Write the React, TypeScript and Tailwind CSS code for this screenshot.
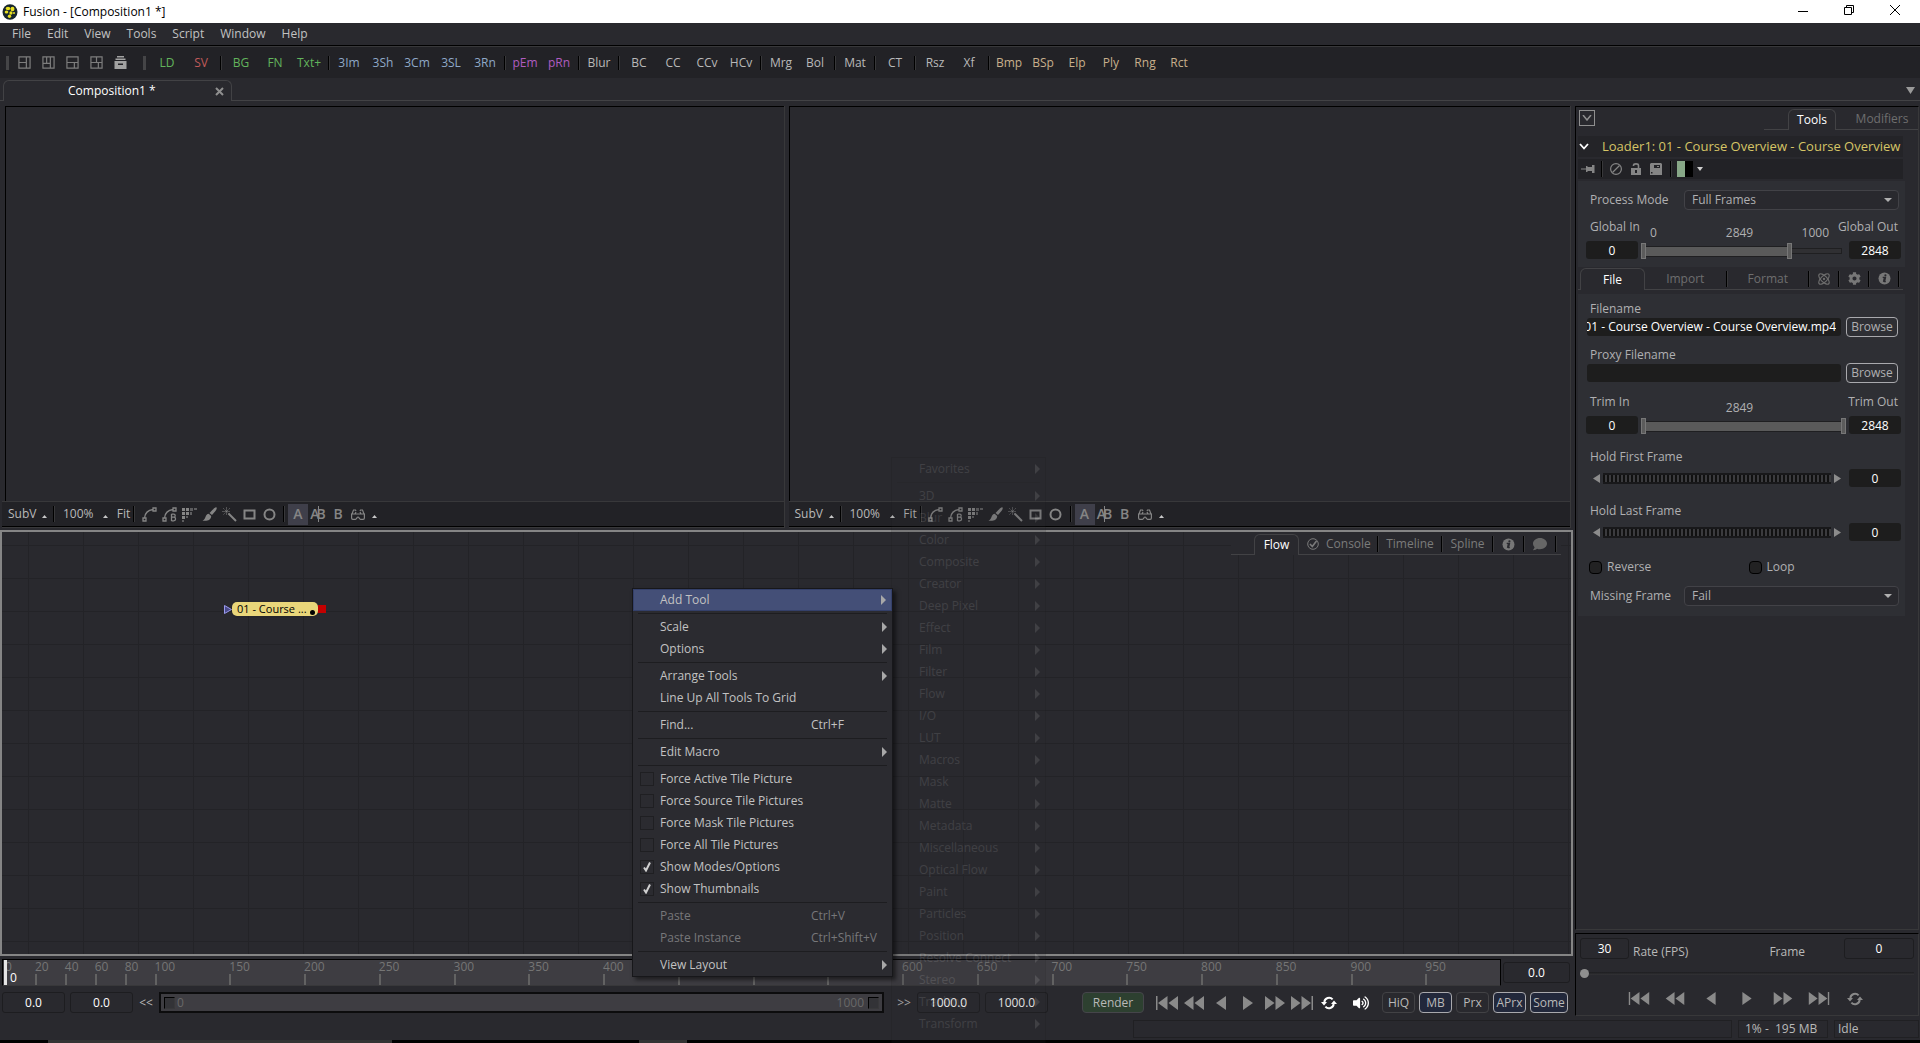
import { Fragment, useState } from 'react';
import type { ReactNode } from 'react';
import { FaCog, FaComment, FaVolumeUp } from 'react-icons/fa';
import { Atom } from 'lucide-react';
import clsx from 'clsx';

const menus = ['File', 'Edit', 'View', 'Tools', 'Script', 'Window', 'Help'];

const toolGroups = [
    { color: 'text-[#62b45c]', tools: ['LD'] },
    { color: 'text-[#c05a5a]', tools: ['SV'], sep: true },
    { color: 'text-[#62b45c]', tools: ['BG', 'FN', 'Txt+'], sep: true },
    { color: 'text-[#8fa9c8]', tools: ['3Im', '3Sh', '3Cm', '3SL', '3Rn'], sep: true },
    { color: 'text-[#b05cc0]', tools: ['pEm', 'pRn'], sep: true },
    { color: 'text-[#b9b9b9]', tools: ['Blur'], sep: true },
    { color: 'text-[#b9b9b9]', tools: ['BC', 'CC', 'CCv', 'HCv'], sep: true },
    { color: 'text-[#b9b9b9]', tools: ['Mrg', 'Bol'], sep: true },
    { color: 'text-[#b9b9b9]', tools: ['Mat'], sep: true },
    { color: 'text-[#b9b9b9]', tools: ['CT'], sep: true },
    { color: 'text-[#b9b9b9]', tools: ['Rsz', 'Xf'], sep: true },
    { color: 'text-[#c8b08c]', tools: ['Bmp', 'BSp', 'Elp', 'Ply', 'Rng', 'Rct'] },
];

const layoutIcons = [
    'M1 1h12v12H1zM9 1v12M9 7H1',
    'M1 1h12v12H1zM5 1v7M9 1v12M1 8h8',
    'M1 1h12v12H1zM1 7h12M9 7v6',
    'M1 1h12v12H1zM1 7h12M7 1v6M9 7v6',
];

type MenuEntry = {
    label: string;
    shortcut?: string;
    arrow?: boolean;
    check?: boolean;
    disabled?: boolean;
    active?: boolean;
};

const contextMenu: MenuEntry[][] = [
    [{ label: 'Add Tool', arrow: true, active: true }],
    [{ label: 'Scale', arrow: true }, { label: 'Options', arrow: true }],
    [{ label: 'Arrange Tools', arrow: true }, { label: 'Line Up All Tools To Grid' }],
    [{ label: 'Find...', shortcut: 'Ctrl+F' }],
    [{ label: 'Edit Macro', arrow: true }],
    [
        { label: 'Force Active Tile Picture', check: false },
        { label: 'Force Source Tile Pictures', check: false },
        { label: 'Force Mask Tile Pictures', check: false },
        { label: 'Force All Tile Pictures', check: false },
        { label: 'Show Modes/Options', check: true },
        { label: 'Show Thumbnails', check: true },
    ],
    [
        { label: 'Paste', shortcut: 'Ctrl+V', disabled: true },
        { label: 'Paste Instance', shortcut: 'Ctrl+Shift+V', disabled: true },
    ],
    [{ label: 'View Layout', arrow: true }],
];

const toolCategories = [
    '3D', 'Blur', 'Color', 'Composite', 'Creator', 'Deep Pixel', 'Effect', 'Film', 'Filter', 'Flow', 'I/O', 'LUT',
    'Macros', 'Mask', 'Matte', 'Metadata', 'Miscellaneous', 'Optical Flow', 'Paint', 'Particles', 'Position',
    'Resolve Connect', 'Stereo', 'Tracking', 'Transform',
];

const rulerMarks = [0, 20, 40, 60, 80, 100, 150, 200, 250, 300, 350, 400, 450, 500, 550, 600, 650, 700, 750, 800, 850, 900, 950, 1000];

const thumb =
    '[&::-webkit-slider-thumb]:pointer-events-auto [&::-webkit-slider-thumb]:appearance-none [&::-webkit-slider-thumb]:h-4 [&::-webkit-slider-thumb]:w-[5px] [&::-webkit-slider-thumb]:border [&::-webkit-slider-thumb]:border-[#777] [&::-webkit-slider-thumb]:bg-[#5c5c5c]';

const bracketThumb =
    '[&::-webkit-slider-thumb]:pointer-events-auto [&::-webkit-slider-thumb]:appearance-none [&::-webkit-slider-thumb]:h-3 [&::-webkit-slider-thumb]:w-[11px] [&::-webkit-slider-thumb]:border [&::-webkit-slider-thumb]:border-[#38383a] [&::-webkit-slider-thumb]:border-l-black [&::-webkit-slider-thumb]:border-t-black [&::-webkit-slider-thumb]:bg-[#333337]';

/* ---------- small pieces ---------- */

const Sep = ({ className }: { className?: string }) => (
    <span className={clsx('w-0.5 shrink-0 border-l border-black bg-[#38383a]', className)} />
);

const ArrowUp = () => (
    <svg width="5" height="3" viewBox="0 0 5 3" className="mt-1 shrink-0">
        <path d="M0 3 2.5 0 5 3z" fill="#c8c8c8" />
    </svg>
);

const ArrowRight = ({ className }: { className?: string }) => (
    <svg width="5" height="10" viewBox="0 0 5 10" className={clsx('shrink-0', className)}>
        <path d="M0 0 5 5 0 10z" fill="currentColor" />
    </svg>
);

const InfoIcon = () => (
    <svg width="13" height="13" viewBox="0 0 13 13">
        <circle cx="6.5" cy="6.5" r="6" fill="#777" />
        <circle cx="7.4" cy="3.3" r="1.1" fill="#29292e" />
        <path d="M4.7 5.4h2.8L6.6 9.6h1.2M5.5 9.8 6.3 6" stroke="#29292e" strokeWidth="1.3" fill="none" />
    </svg>
);

const LoopIcon = () => (
    <svg width="16" height="14" viewBox="0 0 16 14">
        <path d="M3.3 6A4.8 4.8 0 0 1 11.6 3.4M12.7 8A4.8 4.8 0 0 1 4.4 10.6" stroke="currentColor" strokeWidth="2" fill="none" />
        <path d="M0 6h6L3 9.6zM16 8h-6l3-3.6z" fill="currentColor" />
    </svg>
);

const transportShapes = [
    { name: 'Go to start', w: 22, d: 'M0 0h1.5v14H0zM11.5 0v14L2 7zM22 0v14L12.5 7z' },
    { name: 'Fast reverse', w: 20, d: 'M9.5 0v14L0 7zM20 0v14L10.5 7z' },
    { name: 'Play reverse', w: 10, d: 'M10 0v14L0 7z' },
    { name: 'Play forward', w: 10, d: 'M0 0v14l10-7z' },
    { name: 'Fast forward', w: 20, d: 'M0 0v14l9.5-7zM10.5 0v14L20 7z' },
    { name: 'Go to end', w: 22, d: 'M0 0v14l9.5-7zM10.5 0v14L20 7zM20.5 0H22v14h-1.5z' },
];

const Transport = ({ cell, small }: { cell: string; small?: boolean }) => (
    <>
        {transportShapes.map((s) => (
            <button key={s.name} aria-label={s.name} className={clsx('flex shrink-0 items-center justify-center text-[#8a8a8a]', cell)}>
                <svg width={s.w} height={small ? 13 : 14} viewBox={`0 0 ${s.w} 14`}>
                    <path d={s.d} fill="currentColor" />
                </svg>
            </button>
        ))}
    </>
);

const Field = ({ label, value, className }: { label: string; value: string; className: string }) => (
    <input
        aria-label={label}
        defaultValue={value}
        className={clsx('shrink-0 rounded-[3px] text-center text-white outline-none', className)}
    />
);

const darkField = 'h-[18px] w-[52px] bg-[#1d1d1d]';
const flatField = 'h-[21px] border border-[#1d1d20] bg-[#29292e]';

/* ---------- window chrome ---------- */

const TitleBar = () => (
    <header className="flex h-[23px] shrink-0 items-center bg-white pr-[2px] text-black">
        <svg width="16" height="16" viewBox="0 0 16 16" className="ml-[2px]">
            <ellipse cx="8" cy="8" rx="7.5" ry="7.8" fill="#17262e" />
            <g fill="#e8e020">
                <ellipse cx="6" cy="4.5" rx="2.3" ry="1.8" />
                <ellipse cx="10.5" cy="5" rx="2" ry="2.2" />
                <ellipse cx="4.5" cy="8" rx="1.8" ry="1.6" />
                <ellipse cx="9" cy="9" rx="1.6" ry="1.8" />
                <ellipse cx="7.5" cy="12.2" rx="1.7" ry="1.7" />
                <circle cx="12" cy="9" r="1" />
            </g>
        </svg>
        <h1 className="ml-[5px] flex-1">Fusion - [Composition1 *]</h1>
        <button aria-label="Minimize" className="flex h-full w-[46px] items-center justify-center">
            <svg width="10" height="10"><path d="M0 4.5h10" stroke="#000" /></svg>
        </button>
        <button aria-label="Restore" className="flex h-full w-[46px] items-center justify-center pb-1">
            <svg width="10" height="10"><path d="M.5 2.5h7v7h-7zM2.500 2.5v-2h7v7h-2" stroke="#000" fill="none" /></svg>
        </button>
        <button aria-label="Close" className="flex h-full w-[46px] items-center justify-center pb-1">
            <svg width="10" height="10"><path d="m0 0 10 10M10 0 0 10" stroke="#000" /></svg>
        </button>
    </header>
);

const Toolbar = () => (
    <div className="flex h-[31px] shrink-0 items-center bg-[#222226]">
        <span className="ml-[6px] mr-[3px] h-3.5 w-[3px] bg-[#454547]" />
        {layoutIcons.map((d) => (
            <button key={d} aria-label="Layout preset" className="flex w-6 justify-center">
                <svg width="13" height="13" viewBox="0 0 14 14"><path d={d} stroke="#7d7d7d" strokeWidth="1.3" fill="none" /></svg>
            </button>
        ))}
        <button aria-label="Bins" className="flex w-6 justify-center">
            <svg width="13" height="13" viewBox="0 0 13 13" fill="#a2a2a2">
                <path d="M3 0h7v1.5H3zM1.5 2.5h10V4h-10zM.5 5h12v8H.5zM4 7.5V9h5V7.5z" fillRule="evenodd" />
            </svg>
        </button>
        <span className="ml-[11px] mr-1 h-3.5 w-[3px] bg-[#454547]" />
        {toolGroups.map((group, i) => (
            <Fragment key={i}>
                {group.tools.map((tool) => (
                    <button key={tool} className={clsx('w-[34px] text-center', group.color)}>{tool}</button>
                ))}
                {group.sep && <Sep className="mx-0.5 h-3.5" />}
            </Fragment>
        ))}
    </div>
);

const CompositionTabs = () => (
    <div className="flex h-[23px] shrink-0 items-stretch pt-[2px]">
        <span className="w-[3px] border-b border-[#424245]" />
        <div className="flex w-[229px] items-center rounded-t-md border border-b-0 border-[#424245] text-white">
            <button className="flex-1 pl-[64px] text-left">Composition1 *</button>
            <button aria-label="Close tab" className="mr-[7px]">
                <svg width="9" height="9"><path d="m1 1 7 7M8 1 1 8" stroke="#8f8f8f" strokeWidth="2" /></svg>
            </button>
        </div>
        <div className="flex flex-1 items-center justify-end border-b border-[#424245] pr-[5px]">
            <button aria-label="Tab list">
                <svg width="9" height="7"><path d="M0 0h9L4.5 7z" fill="#9a9a9a" /></svg>
            </button>
        </div>
    </div>
);

/* ---------- viewers ---------- */

const viewIcons: { name: string; icon: ReactNode }[] = [
    {
        name: 'Polyline',
        icon: <path d="M2.5 11C3 6 6.5 3 11 2.5M1 11h3v3H1zM11 1h3v3h-3z" stroke="currentColor" strokeWidth="1.3" fill="none" />,
    },
    {
        name: 'B-Spline',
        icon: (
            <path
                d="M2.5 11C3 6 6.5 3 11 2.5M1 11h3v3H1zM11 1h3v3h-3zM9.5 7v7M9.5 7.2h2.2c2 0 2 3 0 3H9.500M11.7 10.2c2.5 0 2.5 3.6 0 3.6H9.5"
                stroke="currentColor"
                strokeWidth="1.3"
                fill="none"
            />
        ),
    },
    {
        name: 'Bitmap',
        icon: (
            <g fill="currentColor">
                <path d="M0 1h3v3H0zM4 1h3v3H4zM0 5h3v3H0zM4 5h3v3H4zM0 9h3v3H0z" />
                <path opacity=".6" d="M8 1h3v3H8zM12 1h3v2h-3zM8 5h2v3H8zM4 9h2v2H4zM0 13h2v2H0z" />
            </g>
        ),
    },
    {
        name: 'Paint',
        icon: <path d="M14.5.5c1 1-1 3.5-4.5 7.5L7.5 6C11 2.5 13.5-.5 14.5.5zM6.7 6.8l2.5 2.1C9 13 5 14.5.5 13.5c2.5-.7 2.5-3 3.5-4.8.7-1.1 1.6-1.700 2.700-1.900z" fill="currentColor" />,
    },
    {
        name: 'Wand',
        icon: (
            <>
                <path d="m6.5 6.5 7.5 7.5" stroke="currentColor" strokeWidth="2" />
                <path d="M4.5.5v8M.5 4.5h8M1.5 1.5l6 6M7.5 1.5l-6 6" stroke="currentColor" strokeDasharray="1 1" />
            </>
        ),
    },
    { name: 'Rectangle', icon: <path d="M2.5 3.5h10v8h-10z" stroke="currentColor" strokeWidth="2" fill="none" /> },
    { name: 'Ellipse', icon: <circle cx="7.5" cy="7.5" r="5" stroke="currentColor" strokeWidth="2" fill="none" /> },
];

const Viewer = ({ indent }: { indent?: boolean }) => (
    <section className="flex min-w-0 flex-1 flex-col border-b border-r border-[#38383a]">
        <div className={clsx('flex-1 border-l border-t border-black', indent && 'ml-[3px]')} />
        <div className="flex h-[26px] shrink-0 items-center border-y border-b-black border-t-[#38383a] bg-[#222226] pl-[6px] text-[#b9b9b9]">
            <button className="flex w-[45px] items-center gap-1.5">SubV <ArrowUp /></button>
            <Sep className="h-4" />
            <button className="ml-2 flex w-[45px] items-center justify-between"><span>100%</span><ArrowUp /></button>
            <button className="ml-[6px] w-[19px]">Fit</button>
            <Sep className="mr-1 h-4" />
            {viewIcons.map((v) => (
                <button key={v.name} aria-label={v.name} className="flex w-5 justify-center text-[#858585]">
                    <svg width="15" height="15" viewBox="0 0 15 15">{v.icon}</svg>
                </button>
            ))}
            <Sep className="ml-1 mr-[3px] h-4" />
            <button className="h-[21px] w-5 bg-[#3f3f4a] text-sm font-semibold text-[#858585]">A</button>
            <button aria-label="A and B" className="flex w-5 items-center justify-center text-sm font-semibold text-[#858585]">
                <span>A</span>
                <span className="-mx-0.5 h-4 w-px bg-[#858585]" />
                <span>B</span>
            </button>
            <button className="w-5 text-sm font-semibold text-[#858585]">B</button>
            <button aria-label="Stereo" className="mr-1 flex w-5 justify-center">
                <svg width="14" height="12" viewBox="0 0 14 12" stroke="#858585" fill="none" strokeWidth="1.2">
                    <path d="M.6 6h12.8v4c0 .7-.6 1.3-1.3 1.3H9.5C8.5 11.3 8 9 7 9s-1.5 2.3-2.5 2.3H1.9C1.2 11.3.6 10.7.6 10zM1 6l1.500-4h2l.5 1M13 6l-1.5-4h-2L9 3M4 6l1-2M10 6 9 4" />
                </svg>
            </button>
            <ArrowUp />
        </div>
    </section>
);

/* ---------- flow ---------- */

const FlowTabs = () => (
    <div className="flex h-[23px] items-stretch self-end bg-[#29292e] pt-0.5 text-[#7b7b7b]">
        <span className="w-[23px] border-b border-[#424245]" />
        <button className="w-[45px] rounded-t-md border border-b-0 border-[#424245] text-white">Flow</button>
        <div className="flex items-center border-b border-[#424245]">
            <button className="flex w-[78px] items-center gap-[7px] pl-2">
                <svg width="12" height="12" viewBox="0 0 12 12" stroke="#7b7b7b" fill="none">
                    <circle cx="6" cy="6" r="5.3" />
                    <path d="m3 6 2.3 2.5L9.5 3" strokeWidth="1.6" />
                </svg>
                Console
            </button>
            <Sep className="h-4" />
            <button className="w-[62px]">Timeline</button>
            <Sep className="h-4" />
            <button className="w-[49px]">Spline</button>
            <Sep className="h-4" />
            <button aria-label="Info" className="flex w-[29px] justify-center"><InfoIcon /></button>
            <Sep className="h-4" />
            <button aria-label="Comments" className="flex w-[30px] justify-center"><FaComment size={14} color="#666" /></button>
            <Sep className="mr-1 h-4" />
        </div>
    </div>
);

const Flow = () => (
    <section className="relative flex min-h-0 flex-1 flex-col border-2 border-[#858585] bg-[linear-gradient(#232327_1px,transparent_1px),linear-gradient(90deg,#232327_1px,transparent_1px)] bg-[size:55px_33px] bg-[position:26px_13px] pr-[10px]">
        <FlowTabs />
        {/* loader tile, placed on the free canvas */}
        <div className="absolute left-[222px] top-[70px] flex items-center">
            <svg width="8" height="9" viewBox="0 0 8 9"><path d="M.5.5v8l7-4z" fill="#4a4a8a" stroke="#9a9aee" /></svg>
            <div className="flex h-3.5 w-[86px] items-center justify-between rounded-[5px] bg-[#e9d67a] pl-[5px] pr-[3px] text-[11px] leading-[14px] text-black shadow">
                <span>01 - Course ...</span>
                <span className="mt-1.5 size-[5px] rounded-full bg-black" />
            </div>
            <span className="size-2 bg-[#c40000]" />
        </div>
    </section>
);

/* ---------- timeline ---------- */

const TimeRuler = () => (
    <div className="mt-[3px] flex h-[27px] shrink-0 items-stretch pl-[2px] pr-[3px]">
        <div className="relative flex flex-1 overflow-hidden border border-b-[#38383a] border-l-black border-r-black border-t-black bg-[#3e3d42] pl-[2px]">
            {rulerMarks.map((mark, i) => (
                <div
                    key={mark}
                    className={clsx('flex min-w-0 basis-0 flex-col', i === rulerMarks.length - 1 && 'w-1 flex-none')}
                    style={{ flexGrow: i < rulerMarks.length - 1 ? rulerMarks[i + 1] - mark : 0 }}
                >
                    <span className="h-3.5 leading-[13px] text-[#757575]">{mark}</span>
                    <span className="h-[11px] w-0.5 bg-[#626262]" />
                </div>
            ))}
            <div className="absolute bottom-0 left-[1px] top-0 w-[3px] bg-[#e4e4e4]" />
            <span className="absolute bottom-0 left-[7px] leading-[14px] text-white">0</span>
        </div>
        <Field label="Current time" value="0.0" className={clsx(flatField, 'ml-0.5 mt-[3px] w-[67px]')} />
    </div>
);

const RenderRange = () => (
    <div className="grid h-[21px] flex-1 items-center border-2 border-[#0c0c0d] bg-[#3e3d42] px-[3px] *:col-start-1 *:row-start-1">
        <div className="flex justify-between pl-[13px] pr-[15px] text-[#686868]">
            <span>0</span>
            <span>1000</span>
        </div>
        <input type="range" aria-label="Render start" min={0} max={1000} defaultValue={0} className={clsx('pointer-events-none h-4 w-full appearance-none bg-transparent', bracketThumb)} />
        <input type="range" aria-label="Render end" min={0} max={1000} defaultValue={1000} className={clsx('pointer-events-none h-4 w-full appearance-none bg-transparent', bracketThumb)} />
    </div>
);

const qualityButtons = [
    { label: 'HiQ', on: false },
    { label: 'MB', on: true },
    { label: 'Prx', on: false },
    { label: 'APrx', on: true },
    { label: 'Some', on: true, wide: true },
];

const TransportBar = () => {
    const [active, setActive] = useState(qualityButtons.filter((b) => b.on).map((b) => b.label));

    const toggle = (label: string) => {
        setActive(active.includes(label) ? active.filter((l) => l !== label) : [...active, label]);
    };

    return (
        <div className="mb-[3px] mt-[6px] flex h-[21px] shrink-0 items-center pl-[2px] pr-[5px] text-[#b9b9b9]">
            <Field label="Global start" value="0.0" className={clsx(flatField, 'w-[63px]')} />
            <Field label="Render start time" value="0.0" className={clsx(flatField, 'ml-[5px] w-[63px]')} />
            <button className="w-[26px]">&lt;&lt;</button>
            <RenderRange />
            <button className="ml-[7px] w-[26px]">&gt;&gt;</button>
            <Field label="Render end time" value="1000.0" className={clsx(flatField, 'w-[63px]')} />
            <Field label="Global end" value="1000.0" className={clsx(flatField, 'ml-[5px] w-[63px]')} />
            <button className="ml-[34px] mr-[9px] h-[21px] w-[62px] rounded border border-[#45454a] bg-[#2d4030]">Render</button>
            <Transport cell="w-[27px]" />
            <button aria-label="Loop" className="flex w-[27px] justify-center text-white"><LoopIcon /></button>
            <button aria-label="Audio" className="mr-0.5 flex w-[38px] justify-center text-white"><FaVolumeUp size={16} /></button>
            <div className="flex gap-[4px]">
                {qualityButtons.map((b) => (
                    <button
                        key={b.label}
                        onClick={() => toggle(b.label)}
                        className={clsx(
                            'h-[21px] rounded border',
                            b.wide ? 'w-[38px]' : 'w-[33px]',
                            active.includes(b.label) ? 'border-[#a9a9ad] bg-[#22283b]' : 'border-[#424245]',
                        )}
                    >
                        {b.label}
                    </button>
                ))}
            </div>
        </div>
    );
};

/* ---------- inspector ---------- */

const RangePair = ({ name, high, range }: { name: string; high: number; range: ReactNode }) => (
    <div className="flex flex-1 flex-col pt-[6px]">
        <div className="grid h-[18px] grid-cols-3 pl-[9px] pr-[17px]">{range}</div>
        <div className="grid h-4 items-center *:col-start-1 *:row-start-1">
            <div className="mr-1 h-1.5 border border-[#1f1f21] bg-[#303033]" />
            <div className="h-[11px] border-y border-[#1f1f21] bg-[#5a5a5a]" style={{ width: `${high}%` }} />
            <input type="range" aria-label={`${name} in`} defaultValue={0} className={clsx('pointer-events-none h-4 w-full appearance-none bg-transparent', thumb)} />
            <input type="range" aria-label={`${name} out`} defaultValue={high} className={clsx('pointer-events-none h-4 w-full appearance-none bg-transparent', thumb)} />
        </div>
    </div>
);

const InOut = ({ name, high, children }: { name: string; high: number; children: ReactNode }) => (
    <div className="flex gap-[3px] pr-1">
        <div className="flex w-[52px] flex-col gap-1">
            <span className="h-[18px] whitespace-nowrap pl-1">{name} In</span>
            <Field label={`${name} In`} value="0" className={darkField} />
        </div>
        <RangePair name={name} high={high} range={children} />
        <div className="flex w-[52px] flex-col gap-1">
            <span className="flex h-[18px] justify-end whitespace-nowrap pr-[3px]">{name} Out</span>
            <Field label={`${name} Out`} value="2848" className={darkField} />
        </div>
    </div>
);

const SelectRow = ({ id, label, value, options }: { id: string; label: string; value: string; options: string[] }) => (
    <div className="flex items-center">
        <label htmlFor={id} className="w-[98px] whitespace-nowrap pl-1">{label}</label>
        <div className="relative mr-[6px] flex-1">
            <select id={id} defaultValue={value} className="block h-5 w-full appearance-none rounded border border-[#424247] bg-[#29292e] pl-[7px] outline-none">
                {options.map((o) => <option key={o}>{o}</option>)}
            </select>
            <svg width="8" height="4" className="pointer-events-none absolute right-[7px] top-2"><path d="M0 0h8L4 4z" fill="#b0b0b0" /></svg>
        </div>
    </div>
);

const FileRow = ({ id, label, value }: { id: string; label: string; value: string }) => (
    <div>
        <label htmlFor={id} className="block h-[17px] pl-1 leading-[17px]">{label}</label>
        <div className="flex h-5 items-center justify-between pl-px pr-[7px]">
            <div className="flex h-[18px] w-[254px] justify-end overflow-hidden rounded-[3px] bg-[#1d1d1d] pr-[5px]">
                <input id={id} defaultValue={value} className="w-[272px] shrink-0 bg-transparent text-right text-white outline-none" />
            </div>
            <button className="h-5 w-[52px] rounded border border-[#a9a9ad]">Browse</button>
        </div>
    </div>
);

const JogWheel = ({ id, label }: { id: string; label: string }) => (
    <div>
        <label htmlFor={id} className="block h-[18px] pl-1">{label}</label>
        <div className="mt-0.5 flex h-[18px] items-center pr-1">
            <button aria-label="Decrease" className="ml-[7px] mr-[3px]">
                <svg width="7" height="9"><path d="M7 0v9L0 4.5z" fill="#8c8c8c" /></svg>
            </button>
            <input
                type="range"
                aria-label={`${label} wheel`}
                className="h-[11px] min-w-0 flex-1 appearance-none border-y-2 border-[#18181a] bg-[repeating-linear-gradient(90deg,#111_0_2px,#3b3b3e_2px_4px)] [&::-webkit-slider-thumb]:appearance-none"
            />
            <button aria-label="Increase" className="ml-[3px] mr-2">
                <svg width="7" height="9"><path d="M0 0v9l7-4.5z" fill="#8c8c8c" /></svg>
            </button>
            <input id={id} defaultValue="0" className={clsx(darkField, 'rounded-[3px] text-center text-white outline-none')} />
        </div>
    </div>
);

const CheckField = ({ label }: { label: string }) => (
    <label className="flex w-[163px] items-center gap-[5px] pl-[3px]">
        <input type="checkbox" className="size-[13px] appearance-none rounded-sm border border-black bg-[#222223] checked:bg-[#8c8c8c]" />
        {label}
    </label>
);

const Inspector = () => (
    <section className="flex min-h-0 flex-1 flex-col border border-b-[#38383a] border-l-black border-r-[#38383a] border-t-black pl-0.5">
        <div className="flex h-[23px] shrink-0 items-stretch pt-0.5 text-[#6e6e6e]">
            <button aria-label="Expand all" className="ml-px mt-px flex size-4 items-center justify-center border border-[#8f8f8f]">
                <svg width="10" height="6"><path d="m1 0 4 5 4-5" stroke="#8f8f8f" strokeWidth="1.5" fill="none" /></svg>
            </button>
            <span className="flex-1" />
            <span className="w-6 border-b border-[#424245]" />
            <button className="w-12 rounded-t-md border border-b-0 border-[#424245] text-white">Tools</button>
            <button className="w-[82px] border-b border-[#424245] pl-2.5">Modifiers</button>
        </div>

        <div className="mr-[15px] mt-1.5 flex h-[21px] shrink-0 items-center bg-[#242428]">
            <button aria-label="Collapse" className="ml-px">
                <svg width="10" height="7"><path d="m1 1 4 4.5L9 1" stroke="#fff" strokeWidth="1.8" fill="none" /></svg>
            </button>
            <h2 className="ml-[13px] whitespace-nowrap text-[13px] font-medium text-[#d6c566]">Loader1: 01 - Course Overview - Course Overview</h2>
        </div>

        <div className="mr-[15px] mt-0.5 flex h-5 shrink-0 items-center bg-[#222226] text-[#858585]">
            <button aria-label="Pin" className="ml-[3px] mr-[6px]">
                <svg width="14" height="8" viewBox="0 0 14 8" fill="currentColor"><path d="M0 3.4h5V1h1.5v1H11V0h2.5v8H11V6H6.500v1H5V4.6H0z" /></svg>
            </button>
            <Sep className="h-4" />
            <button aria-label="Pass through" className="ml-[7px]">
                <svg width="12" height="12" stroke="currentColor" fill="none" strokeWidth="1.2"><circle cx="6" cy="6" r="5.4" /><path d="M2.5 9.5 9.5 2.5" /></svg>
            </button>
            <button aria-label="Lock" className="ml-2">
                <svg width="12" height="12" viewBox="0 0 12 12" fill="currentColor">
                    <path d="M1 5h10v7H1zM5 7v3h2V7z" fillRule="evenodd" />
                    <path d="M3.5 3v-.5C3.5.3 8.5.3 8.5 2.5V5" stroke="currentColor" strokeWidth="1.6" fill="none" />
                </svg>
            </button>
            <button aria-label="Versions" className="ml-2">
                <svg width="12" height="12" viewBox="0 0 12 12" fill="currentColor"><path d="M1 0h10l1 1v11H0V1zM4 2v3h6V2zM7 3h2v1H7zM1 9v1.5h1.5V9z" fillRule="evenodd" /></svg>
            </button>
            <Sep className="ml-2 h-4" />
            <button aria-label="Tile color" className="ml-[5px] flex items-center">
                <span className="h-4 w-2 bg-[#87a787]" />
                <span className="h-4 w-2 bg-black" />
                <svg width="6" height="4" className="ml-1"><path d="M0 0h6L3 4z" fill="#d0d0d0" /></svg>
            </button>
        </div>

        <div className="mr-[13px] mt-0.5 flex shrink-0 flex-col gap-[9px] bg-[#2e2f34] pb-2 pl-2 pt-[9px]">
            <SelectRow id="process-mode" label="Process Mode" value="Full Frames" options={['Full Frames', 'NTSC Frames', 'PAL Frames']} />
            <InOut name="Global" high={73}>
                <span>0</span>
                <span className="text-center">2849</span>
                <span className="text-right">1000</span>
            </InOut>
        </div>

        <div className="mr-[15px] mt-px flex h-[22px] shrink-0 items-stretch text-[#6e6e6e]">
            <span className="w-0.5 border-b border-[#424245]" />
            <button className="w-[65px] rounded-t-md border border-b-0 border-[#424245] text-white">File</button>
            <div className="flex flex-1 items-center border-b border-[#424245]">
                <button className="flex-1">Import</button>
                <Sep className="h-4" />
                <button className="flex-1">Format</button>
                <Sep className="h-4" />
                <button aria-label="Settings" className="flex w-7 justify-center"><Atom size={14} color="#6e6e6e" /></button>
                <Sep className="h-4" />
                <button aria-label="Common controls" className="flex w-7 justify-center"><FaCog size={13} color="#777" /></button>
                <Sep className="h-4" />
                <button aria-label="Info" className="flex w-7 justify-center"><InfoIcon /></button>
                <Sep className="mr-[3px] h-4" />
            </div>
        </div>

        <div className="mr-[13px] mt-1 shrink-0 bg-[#2e2f34] pb-2.5 pl-2 pt-[6px]">
            <div className="flex flex-col gap-[9px]">
                <FileRow id="filename" label="Filename" value="01 - Course Overview - Course Overview.mp4" />
                <FileRow id="proxy" label="Proxy Filename" value="" />
            </div>
            <div className="mt-[11px]">
                <InOut name="Trim" high={100}>
                    <span className="col-start-2 text-center">2849</span>
                </InOut>
            </div>
            <div className="mt-[15px] flex flex-col gap-4">
                <JogWheel id="hold-first" label="Hold First Frame" />
                <JogWheel id="hold-last" label="Hold Last Frame" />
            </div>
            <div className="mb-2.5 mt-[17px] flex h-[18px] items-center">
                <CheckField label="Reverse" />
                <CheckField label="Loop" />
            </div>
            <SelectRow id="missing" label="Missing Frame" value="Fail" options={['Fail', 'Hold Previous', 'Output Black', 'Wait']} />
        </div>
    </section>
);

const PlaybackPanel = () => (
    <section className="mt-[3px] flex h-[83px] shrink-0 flex-col border border-b-[#38383a] border-l-black border-r-[#38383a] border-t-black pb-2 pl-1 pr-[4px] pt-1 text-[#b9b9b9]">
        <div className="flex items-start">
            <input id="rate" defaultValue="30" className={clsx(flatField, 'w-[49px] rounded-[3px] text-center text-white')} />
            <label htmlFor="rate" className="ml-1 mt-1.5 flex-1 leading-4">Rate (FPS)</label>
            <label htmlFor="frame" className="mr-[39px] mt-1.5 leading-4">Frame</label>
            <input id="frame" defaultValue="0" className={clsx(flatField, 'w-[70px] rounded-[3px] text-center text-white')} />
        </div>
        <input
            type="range"
            aria-label="Playback position"
            defaultValue={0}
            className="mt-[9px] h-[9px] w-full appearance-none bg-[linear-gradient(#1d1d20,#333336)] bg-[size:100%_3px] bg-center bg-no-repeat [&::-webkit-slider-thumb]:size-[9px] [&::-webkit-slider-thumb]:appearance-none [&::-webkit-slider-thumb]:rounded-full [&::-webkit-slider-thumb]:bg-[#8f8f8f]"
        />
        <div className="mt-3 flex flex-1 items-center pl-[41px]">
            <Transport cell="w-9" small />
            <button aria-label="Loop" className="flex w-9 justify-center text-[#8a8a8a]"><LoopIcon /></button>
        </div>
    </section>
);

/* ---------- floating menus ---------- */

const ContextMenu = () => (
    <ul role="menu" className="absolute left-[632px] top-[588px] w-[261px] border border-[#17171a] bg-[#2b2b30] text-[#c2c2c2] shadow-[3px_3px_4px_rgba(0,0,0,0.5)]">
        {contextMenu.map((group, i) => (
            <Fragment key={i}>
                {i > 0 && <li role="separator" className="mx-[5px] my-0.5 h-px bg-[#1d1d20]" />}
                {group.map((item) => (
                    <li
                        key={item.label}
                        role="menuitem"
                        className={clsx(
                            'flex h-[22px] items-center pr-[5px]',
                            item.active && 'border border-[#34406a] bg-[#444f77]',
                            item.disabled && 'text-[#77777a]',
                        )}
                    >
                        {item.check === undefined ? (
                            <>
                                <span className={clsx('flex-1', item.active ? 'pl-[26px]' : 'pl-[27px]')}>{item.label}</span>
                                {item.shortcut && <span className="w-[76px] whitespace-nowrap">{item.shortcut}</span>}
                                {item.arrow && <ArrowRight className="text-[#a8a8a8]" />}
                            </>
                        ) : (
                            <label className="flex items-center gap-[6px] pl-[7px]">
                                <span className="grid place-items-center *:col-start-1 *:row-start-1">
                                    <input type="checkbox" defaultChecked={item.check} className="peer size-3.5 appearance-none border border-[#1f1f22]" />
                                    <svg width="8" height="10" viewBox="0 0 8 10" className="pointer-events-none invisible peer-checked:visible">
                                        <path d="m1 5.5 2 3L7 .5" stroke="#d0d0d0" strokeWidth="2" fill="none" />
                                    </svg>
                                </span>
                                {item.label}
                            </label>
                        )}
                    </li>
                ))}
            </Fragment>
        ))}
    </ul>
);

/* submenu caught while it fades in */
const AddToolMenu = () => (
    <ul role="menu" className="absolute bottom-0 left-[891px] top-[457px] w-[155px] overflow-hidden border border-b-0 border-[#17171a] bg-[#2b2b30] text-[#c2c2c2] opacity-[0.15]">
        <li role="menuitem" className="flex h-[22px] items-center pl-[27px] pr-[5px]">
            <span className="flex-1">Favorites</span>
            <ArrowRight />
        </li>
        <li role="separator" className="mx-[5px] my-0.5 h-px bg-[#1d1d20]" />
        {toolCategories.map((name) => (
            <li key={name} role="menuitem" className="flex h-[22px] items-center pl-[27px] pr-[5px]">
                <span className="flex-1">{name}</span>
                <ArrowRight />
            </li>
        ))}
    </ul>
);

export default function App() {
    return (
        <div className="relative flex h-screen flex-col overflow-hidden bg-[#29292e] font-['Open_Sans','Noto_Sans',sans-serif] text-xs text-[#b0b0b2]">
            <TitleBar />
            <nav className="flex h-[23px] shrink-0 items-center border-b border-black pl-[12px] text-[#c2c2c2]">
                {menus.map((menu) => (
                    <button key={menu} className="mr-[16px]">{menu}</button>
                ))}
            </nav>
            <div className="h-px shrink-0 bg-[#38383a]" />
            <Toolbar />
            <CompositionTabs />

            <main className="flex min-h-0 flex-1 pt-[5px]">
                <div className="flex min-w-0 flex-1 flex-col pr-[2px]">
                    <div className="flex min-h-0 flex-1 gap-1 pb-0.5 pl-[2px] pr-[2px]">
                        <Viewer indent />
                        <Viewer />
                    </div>
                    <Flow />
                    <TimeRuler />
                    <TransportBar />
                </div>
                <aside className="flex w-[345px] shrink-0 flex-col pr-px">
                    <Inspector />
                    <PlaybackPanel />
                </aside>
            </main>

            <footer className="mt-1 flex h-[18px] shrink-0 justify-end gap-[6px] text-[#b9b9b9]">
                <span className="w-[599px] border border-[#202023]" />
                <span className="w-[90px] whitespace-pre border border-[#202023] pl-[6px] leading-4">1% -  195 MB</span>
                <span className="mr-px w-[85px] border border-[#202023] pl-[3px] leading-4">Idle</span>
            </footer>
            <div className="mt-[2px] flex h-[3px] shrink-0 bg-black">
                <span className="ml-12 w-[344px] bg-[#333]" />
                <span className="ml-[247px] w-12 bg-[#333]" />
            </div>

            <AddToolMenu />
            <ContextMenu />
        </div>
    );
}
